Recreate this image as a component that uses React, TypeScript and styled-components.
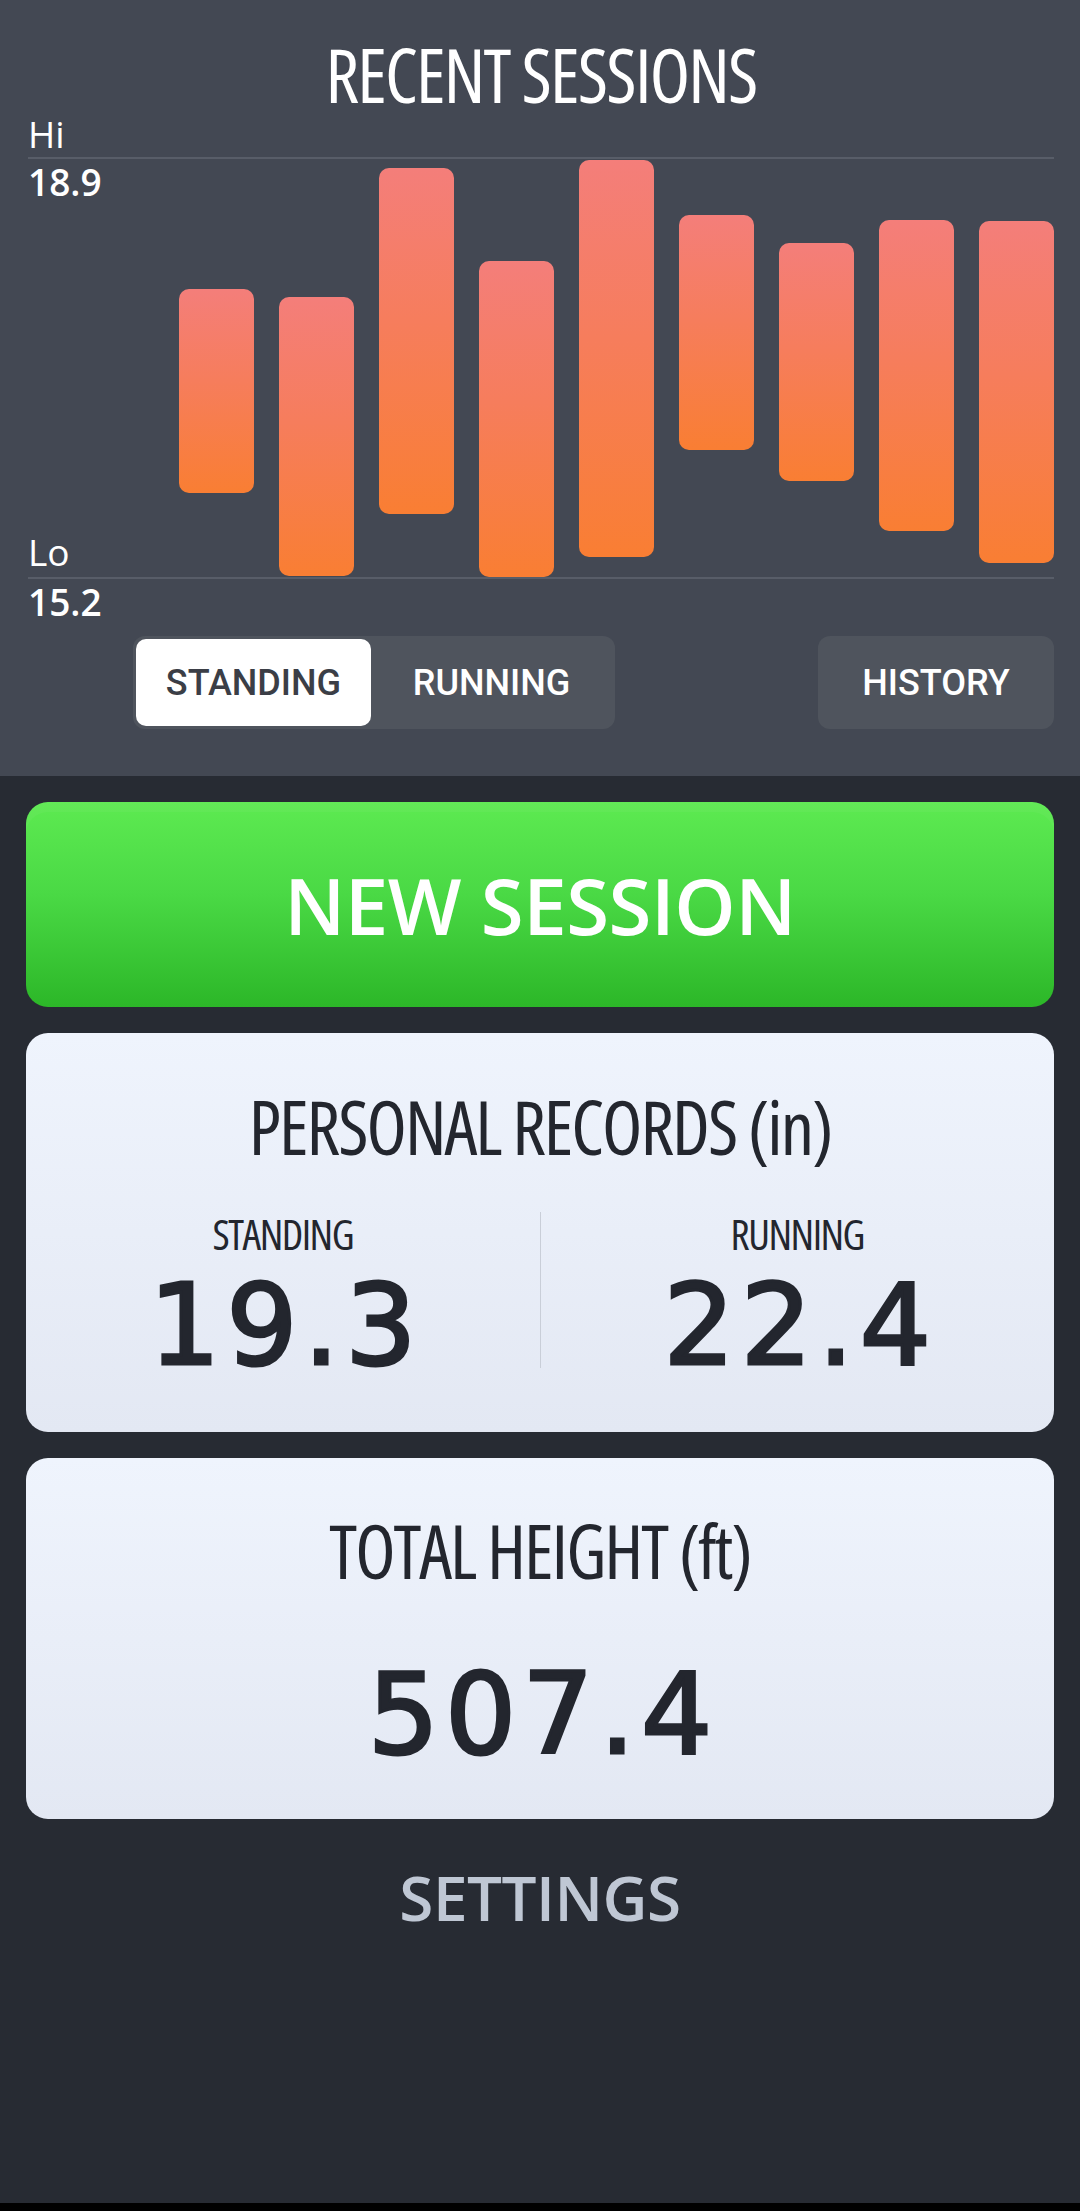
import React from "react";
import styled, { createGlobalStyle } from "styled-components";

const GlobalStyle = createGlobalStyle`
  html, body {
    margin: 0;
    padding: 0;
    background: #272b33;
  }
  * { box-sizing: border-box; }
`;

const CONDENSED = "'Open Sans', 'Noto Sans', sans-serif";
const UI = "Roboto, 'Noto Sans', sans-serif";
const DIGITS = "'DejaVu Sans', 'Liberation Sans', sans-serif";

const HI = 18.9;
const LO = 15.2;
const PLOT_H = 418;

const sessions = [
  { hi: 17.75, lo: 15.94 },
  { hi: 17.68, lo: 15.21 },
  { hi: 18.82, lo: 15.76 },
  { hi: 18.0, lo: 15.2 },
  { hi: 18.89, lo: 15.38 },
  { hi: 18.4, lo: 16.32 },
  { hi: 18.16, lo: 16.05 },
  { hi: 18.36, lo: 15.61 },
  { hi: 18.35, lo: 15.32 },
];

const Screen = styled.div`
  width: 1080px;
  min-height: 2211px;
  display: flex;
  flex-direction: column;
  background: #272b33;
`;

const TopSection = styled.section`
  background: #434853;
  padding: 39px 26px 47px 28px;
  display: flex;
  flex-direction: column;
`;

const Title = styled.h1`
  margin: 0;
  text-align: center;
  color: #ffffff;
  font-family: ${CONDENSED};
  font-stretch: 75%;
  font-weight: 500;
  font-size: 74px;
  line-height: 72px;
  height: 72px;
  letter-spacing: -1.8px;
`;

const AxisText = styled.div<{ $strong?: boolean; $gap?: number }>`
  font-family: ${CONDENSED};
  font-stretch: 88%;
  font-size: 37px;
  line-height: 38px;
  height: 38px;
  font-weight: ${(p) => (p.$strong ? 600 : 400)};
  color: #ffffff;
  margin-top: ${(p) => p.$gap ?? 0}px;
`;

const Plot = styled.div`
  margin-top: 4px;
  height: ${PLOT_H + 4}px;
  border-top: 2px solid #585d68;
  border-bottom: 2px solid #585d68;
  display: flex;
`;

const AxisColumn = styled.div`
  display: flex;
  flex-direction: column;
  justify-content: space-between;
  padding: 4px 0 6px;
`;

const Bars = styled.div`
  margin-left: auto;
  display: flex;
  gap: 25px;
  align-items: flex-start;
`;

const Bar = styled.div`
  width: 75px;
  border-radius: 10px;
  background: linear-gradient(180deg, #f47e7a 0%, #f67d5c 45%, #f97e33 100%);
`;

const Controls = styled.div`
  margin-top: 15px;
  display: flex;
  justify-content: space-between;
  align-items: center;
`;

const Segmented = styled.div`
  margin-left: 105px;
  height: 93px;
  padding: 3px;
  border-radius: 12px;
  background: #4f545d;
  display: grid;
  grid-template-columns: 235px 241px;
`;

const Segment = styled.div<{ $active?: boolean }>`
  display: flex;
  align-items: center;
  justify-content: center;
  border-radius: 10px;
  background: ${(p) => (p.$active ? "#ffffff" : "transparent")};
  color: ${(p) => (p.$active ? "#3b3e46" : "#ffffff")};
  font-family: ${UI};
  font-weight: 500;
  font-size: 36px;
  letter-spacing: 0;
`;

const HistoryButton = styled.div`
  width: 236px;
  height: 93px;
  border-radius: 12px;
  background: #4f545d;
  color: #ffffff;
  display: flex;
  align-items: center;
  justify-content: center;
  font-family: ${UI};
  font-weight: 500;
  font-size: 36px;
  letter-spacing: 0;
`;

const BottomSection = styled.section`
  flex: 1;
  padding: 26px 26px 0;
  display: flex;
  flex-direction: column;
`;

const NewSessionButton = styled.div`
  height: 205px;
  border-radius: 22px;
  background: linear-gradient(180deg, #5dea51 0%, #4ad945 45%, #2cb728 100%);
  box-shadow: inset 0 10px 0 rgba(255, 255, 255, 0.04);
  display: flex;
  align-items: center;
  justify-content: center;
  color: #ffffff;
  font-family: ${CONDENSED};
  font-stretch: 90%;
  font-weight: 600;
  font-size: 78px;
  line-height: 1;
  letter-spacing: -0.5px;
`;

const Card = styled.div<{ $pt: number; $pb: number }>`
  margin-top: 26px;
  border-radius: 22px;
  background: linear-gradient(180deg, #eff4fd 0%, #e3e8f3 100%);
  padding: ${(p) => p.$pt}px 0 ${(p) => p.$pb}px;
  display: flex;
  flex-direction: column;
  align-items: stretch;
`;

const CardTitle = styled.h2`
  margin: 0;
  text-align: center;
  color: #23262e;
  font-family: ${CONDENSED};
  font-stretch: 75%;
  font-weight: 500;
  font-size: 74px;
  line-height: 74px;
  height: 74px;
  letter-spacing: -2px;
`;

const RecordsRow = styled.div`
  margin-top: 48px;
  display: grid;
  grid-template-columns: 1fr 1px 1fr;
  align-items: start;
`;

const Divider = styled.div`
  height: 156px;
  background: #c9ced8;
`;

const RecordColumn = styled.div`
  display: flex;
  flex-direction: column;
  align-items: center;
  padding-top: 1px;
`;

const RecordLabel = styled.div`
  color: #23262e;
  font-family: ${CONDENSED};
  font-stretch: 75%;
  font-weight: 500;
  font-size: 42px;
  line-height: 42px;
  height: 42px;
  letter-spacing: -1.5px;
`;

const BigNumber = styled.div<{ $gap: number }>`
  margin-top: ${(p) => p.$gap}px;
  padding-left: 6px;
  text-align: center;
  color: #23262e;
  font-family: ${DIGITS};
  font-weight: 400;
  font-size: 112px;
  line-height: 112px;
  height: 112px;
  letter-spacing: 6px;
  -webkit-text-stroke: 3px #23262e;
`;

const SettingsLink = styled.div`
  margin-top: 47px;
  text-align: center;
  color: #bfc7d4;
  font-family: ${CONDENSED};
  font-stretch: 90%;
  font-weight: 600;
  font-size: 62px;
  line-height: 62px;
  letter-spacing: -0.5px;
`;

const NavStrip = styled.div`
  height: 8px;
  background: #000000;
`;

function toPx(v: number) {
  return ((HI - v) / (HI - LO)) * PLOT_H;
}

export default function App() {
  return (
    <Screen>
      <GlobalStyle />
      <TopSection>
        <Title>RECENT SESSIONS</Title>
        <AxisText $gap={4}>Hi</AxisText>
        <Plot>
          <AxisColumn>
            <AxisText $strong>18.9</AxisText>
            <AxisText>Lo</AxisText>
          </AxisColumn>
          <Bars>
            {sessions.map((s, i) => {
              const top = toPx(s.hi);
              const bottom = toPx(s.lo);
              return (
                <Bar
                  key={i}
                  style={{ marginTop: `${top}px`, height: `${bottom - top}px` }}
                />
              );
            })}
          </Bars>
        </Plot>
        <AxisText $strong $gap={4}>
          15.2
        </AxisText>
        <Controls>
          <Segmented>
            <Segment $active>STANDING</Segment>
            <Segment>RUNNING</Segment>
          </Segmented>
          <HistoryButton>HISTORY</HistoryButton>
        </Controls>
      </TopSection>

      <BottomSection>
        <NewSessionButton>NEW SESSION</NewSessionButton>

        <Card $pt={57} $pb={51}>
          <CardTitle>PERSONAL RECORDS (in)</CardTitle>
          <RecordsRow>
            <RecordColumn>
              <RecordLabel>STANDING</RecordLabel>
              <BigNumber $gap={14}>19.3</BigNumber>
            </RecordColumn>
            <Divider />
            <RecordColumn>
              <RecordLabel>RUNNING</RecordLabel>
              <BigNumber $gap={14}>22.4</BigNumber>
            </RecordColumn>
          </RecordsRow>
        </Card>

        <Card $pt={56} $pb={49}>
          <CardTitle>TOTAL HEIGHT (ft)</CardTitle>
          <BigNumber $gap={70}>507.4</BigNumber>
        </Card>

        <SettingsLink>SETTINGS</SettingsLink>
      </BottomSection>
      <NavStrip />
    </Screen>
  );
}
